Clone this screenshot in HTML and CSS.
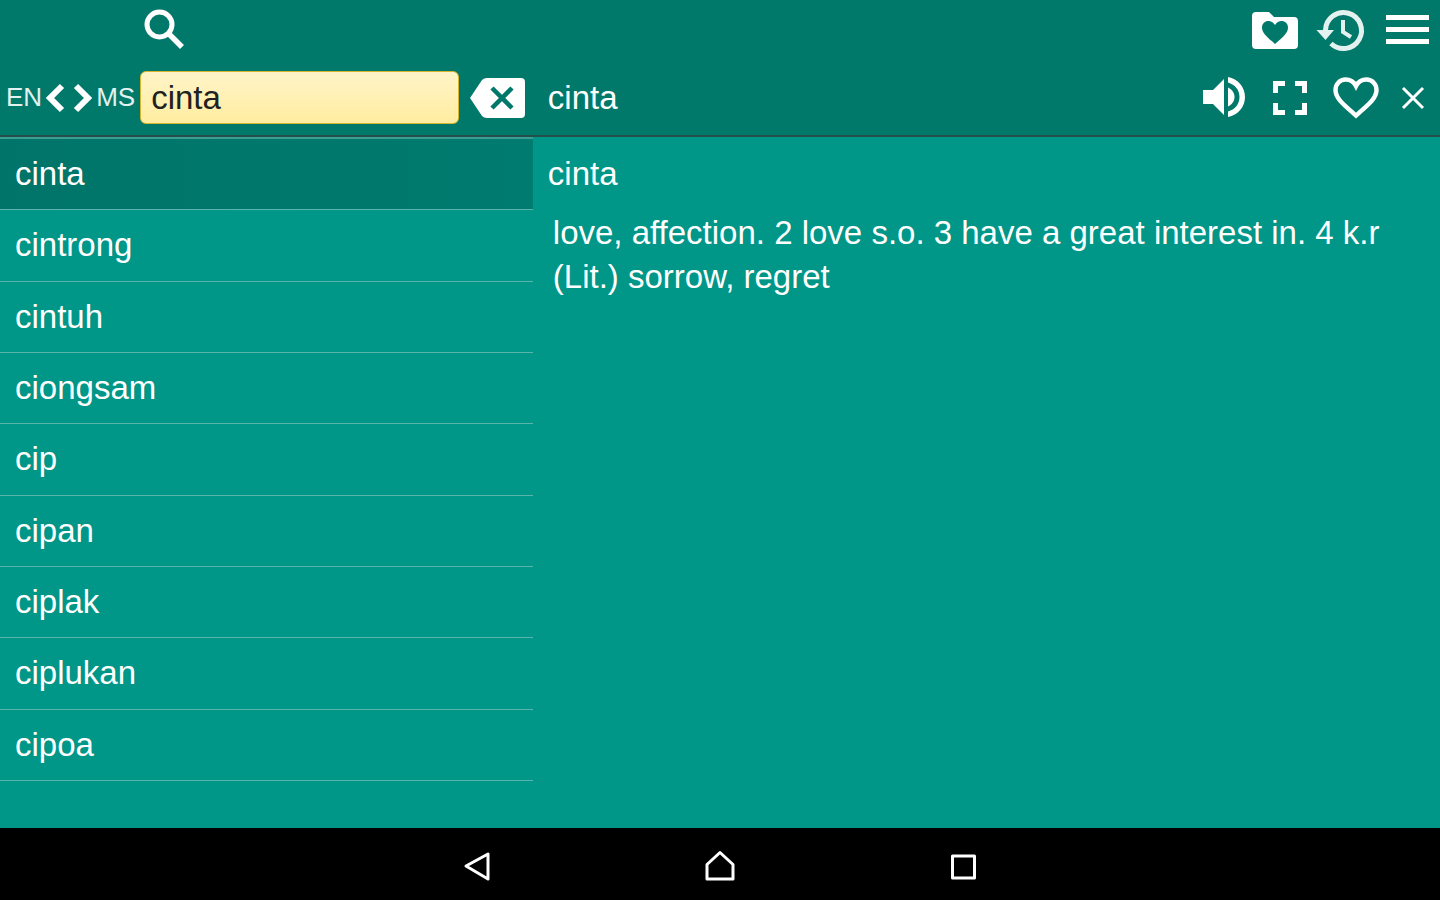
FILE: index.html
```html
<!DOCTYPE html>
<html lang="en">
<head>
  <meta charset="UTF-8">
  <meta name="viewport" content="width=device-width, initial-scale=1.0">
  <title>EN - MS Dictionary</title>
  <link rel="stylesheet" href="styles.css">
</head>
<body>
  <header class="topbar">
    <div class="topbar-left">
      <div class="tabs">
        <button class="icon-btn" aria-label="Search">
          <svg width="40" height="40" viewBox="0 0 40 40" fill="none" stroke="#fff">
            <circle cx="15.500" cy="14.500" r="12.500" stroke-width="5"/>
            <path d="M25 24L38 37" stroke-width="5.500"/>
          </svg>
        </button>
      </div>
      <div class="search-row">
        <button class="lang-btn" aria-label="Swap languages EN and MS">
          <span>EN</span>
          <svg width="46" height="28" viewBox="0 0 46 28" fill="none" stroke="#fff" stroke-width="6">
            <path d="M16 2L4 14L16 26M30 2L42 14L30 26"/>
          </svg>
          <span>MS</span>
        </button>
        <input class="search-input" type="text" value="cinta" aria-label="Search word">
        <button class="icon-btn" aria-label="Clear">
          <svg width="55" height="42" viewBox="0 0 55 42">
            <path d="M0 21L12 3Q14 1 17 1H51Q55 1 55 5V37Q55 41 51 41H17Q14 41 12 39Z" fill="#fff"/>
            <path d="M22 11L42 31M42 11L22 31" stroke="#00796b" stroke-width="4.500"/>
          </svg>
        </button>
      </div>
    </div>

    <div class="topbar-right">
      <div class="main-actions">
        <button class="icon-btn" aria-label="Favorites">
          <svg width="46" height="38" viewBox="-1 0 46 38">
            <path d="M4 1H17L22 6H42Q46 6 46 10V34Q46 38 42 38H4Q0 38 0 34V5Q0 1 4 1Z" fill="#fff"/>
            <path d="M23 33C15 26 10 22 10 16.500C10 12.500 13 10 16.500 10C19 10 21.500 11.500 23 14C24.500 11.500 27 10 29.500 10C33 10 36 12.500 36 16.500C36 22 31 26 23 33Z" fill="#00796b"/>
          </svg>
        </button>
        <button class="icon-btn" aria-label="History">
          <svg width="46" height="42" viewBox="2 0 46 42" fill="none" stroke="#e3f1ef">
            <path d="M9.500 22V21A18 18 0 1 1 15 34.500" stroke-width="5"/>
            <path d="M27 11V23L35 28" stroke-width="4"/>
            <path d="M0.500 21H18L9.500 31Z" fill="#e3f1ef" stroke="none"/>
          </svg>
        </button>
        <button class="icon-btn" aria-label="Menu">
          <svg width="44" height="32" viewBox="0 0 44 32" fill="#fff">
            <path d="M1 1H44V6H1ZM1 13H44V18H1ZM1 25H44V30H1Z"/>
          </svg>
        </button>
      </div>
      <div class="word-row">
        <h1 class="word-title">cinta</h1>
        <div class="word-actions">
          <button class="icon-btn" aria-label="Pronounce">
            <svg width="44" height="42" viewBox="0 0 44 42" fill="#fff">
              <path d="M0 13H10L21 2V38L10 27H0Z"/>
              <path d="M25 10.500C29 12.500 31.500 16 31.500 20C31.500 24 29 27.500 25 29.500Z"/>
              <path d="M25 0C35 2 42 10 42 20C42 30 35 38 25 40V34.500C32 32.500 36.500 27 36.500 20C36.500 13 32 7.500 25 5.500Z"/>
            </svg>
          </button>
          <button class="icon-btn" aria-label="Full screen">
            <svg width="38" height="38" viewBox="0 0 38 38" fill="none" stroke="#fff" stroke-width="5">
              <path d="M4.500 14V4.500H14M24 4.500H33.500V14M33.500 24V33.500H24M14 33.500H4.500V24"/>
            </svg>
          </button>
          <button class="icon-btn" aria-label="Add to favorites">
            <svg width="46" height="42" viewBox="0 0 46 42" fill="none" stroke="#fff" stroke-width="4.500">
              <path d="M23 38.500C11 28 2.500 21.500 2.500 13C2.500 7 7 2.500 12.500 2.500C17 2.500 21 5 23 9C25 5 29 2.500 33.500 2.500C39 2.500 43.500 7 43.500 13C43.500 21.500 35 28 23 38.500Z"/>
            </svg>
          </button>
          <button class="icon-btn" aria-label="Close">
            <svg width="20" height="20" viewBox="0 0 20 20" stroke="#fff" stroke-width="3">
              <path d="M0 0L20 20M20 0L0 20"/>
            </svg>
          </button>
        </div>
      </div>
    </div>
  </header>

  <main class="content">
    <ul class="word-list">
      <li><a class="active" href="#">cinta</a></li>
      <li><a href="#">cintrong</a></li>
      <li><a href="#">cintuh</a></li>
      <li><a href="#">ciongsam</a></li>
      <li><a href="#">cip</a></li>
      <li><a href="#">cipan</a></li>
      <li><a href="#">ciplak</a></li>
      <li><a href="#">ciplukan</a></li>
      <li><a href="#">cipoa</a></li>
    </ul>
    <article class="entry">
      <h2 class="entry-title">cinta</h2>
      <p class="entry-text">love, affection. 2 love s.o. 3 have a great interest in. 4 k.r (Lit.) sorrow, regret</p>
    </article>
  </main>

  <nav class="navbar">
    <button class="icon-btn" aria-label="Back">
      <svg width="32" height="32" viewBox="0 0 32 32" fill="none" stroke="#fff" stroke-width="3" stroke-linejoin="round">
        <path d="M5 16L27 4V29Z"/>
      </svg>
    </button>
    <button class="icon-btn" aria-label="Home">
      <svg width="32" height="32" viewBox="0 0 32 32" fill="none" stroke="#fff" stroke-width="3" stroke-linejoin="round">
        <path d="M3 14.500L16 2.500L29 14.500V29H3Z"/>
      </svg>
    </button>
    <button class="icon-btn" aria-label="Recent apps">
      <svg width="32" height="32" viewBox="0 0 32 32" fill="none" stroke="#fff" stroke-width="3" stroke-linejoin="round">
        <path d="M5.500 6H27.500V28H5.500Z"/>
      </svg>
    </button>
  </nav>
</body>
</html>
```

FILE: styles.css
```css
* {
  box-sizing: border-box;
}

body {
  display: flex;
  flex-direction: column;
  min-height: 100vh;
  margin: 0;
  font-family: "Liberation Sans", Arial, sans-serif;
  font-size: 33px;
  color: #fff;
  background-color: #009688;
}

button {
  padding: 0;
  border: none;
  background: none;
  color: inherit;
  font-family: inherit;
  cursor: pointer;
}

svg {
  display: block;
  overflow: visible;
}

.icon-btn {
  flex-shrink: 0;
}

/* Top bar */
.topbar {
  display: grid;
  grid-template-columns: 37% 1fr;
  background-color: #00796b;
  border-bottom: 2px solid #23504c;
}

.tabs,
.main-actions {
  display: flex;
  align-items: center;
  height: 60px;
}

.tabs {
  padding-left: 144px;
}

.main-actions {
  justify-content: flex-end;
  gap: 21px;
  padding-right: 11px;
}

.search-row,
.word-row {
  display: flex;
  align-items: center;
  height: 75px;
}

.search-row {
  gap: 11px;
  padding: 0 8px 0 6px;
}

.lang-btn {
  display: flex;
  align-items: center;
  gap: 4px;
  margin-right: -6px;
  font-size: 26px;
  color: #e3f1ef;
}

.search-input {
  flex: 1;
  min-width: 0;
  height: 53px;
  padding: 0 10px;
  border: 1px solid #d9b52f;
  border-radius: 6px;
  background: linear-gradient(#fff4c8, #ffeda0);
  font-family: inherit;
  font-size: 33px;
  color: #212121;
}

.search-input:focus {
  outline: none;
  border-color: #ffb300;
}

.word-row {
  justify-content: space-between;
  padding: 0 17px 0 15px;
}

.word-title,
.entry-title {
  margin: 0;
  font-size: 33px;
  font-weight: normal;
}

.word-actions {
  display: flex;
  align-items: center;
  gap: 24px;
}

/* Word list and entry */
.content {
  display: grid;
  grid-template-columns: 37% 1fr;
  flex: 1;
}

.word-list {
  display: grid;
  grid-auto-rows: 1fr;
  margin: 0;
  padding: 0 0 47px;
  border-top: 2px solid #3c9d92;
  list-style: none;
}

.word-list li {
  display: flex;
  border-bottom: 1px solid #59b5ac;
}

.word-list a {
  display: flex;
  flex: 1;
  align-items: center;
  padding: 0 15px;
  color: #fff;
  text-decoration: none;
}

.word-list .active {
  background: linear-gradient(to right, #007468, #007b6f);
}

.entry {
  padding: 0 15px;
}

.entry-title {
  line-height: 74px;
}

.entry-text {
  margin: 0;
  padding-left: 5px;
  line-height: 44px;
}

/* System navigation */
.navbar {
  display: flex;
  align-items: center;
  justify-content: center;
  gap: 211px;
  height: 72px;
  padding-top: 4px;
  background-color: #000;
}
```
